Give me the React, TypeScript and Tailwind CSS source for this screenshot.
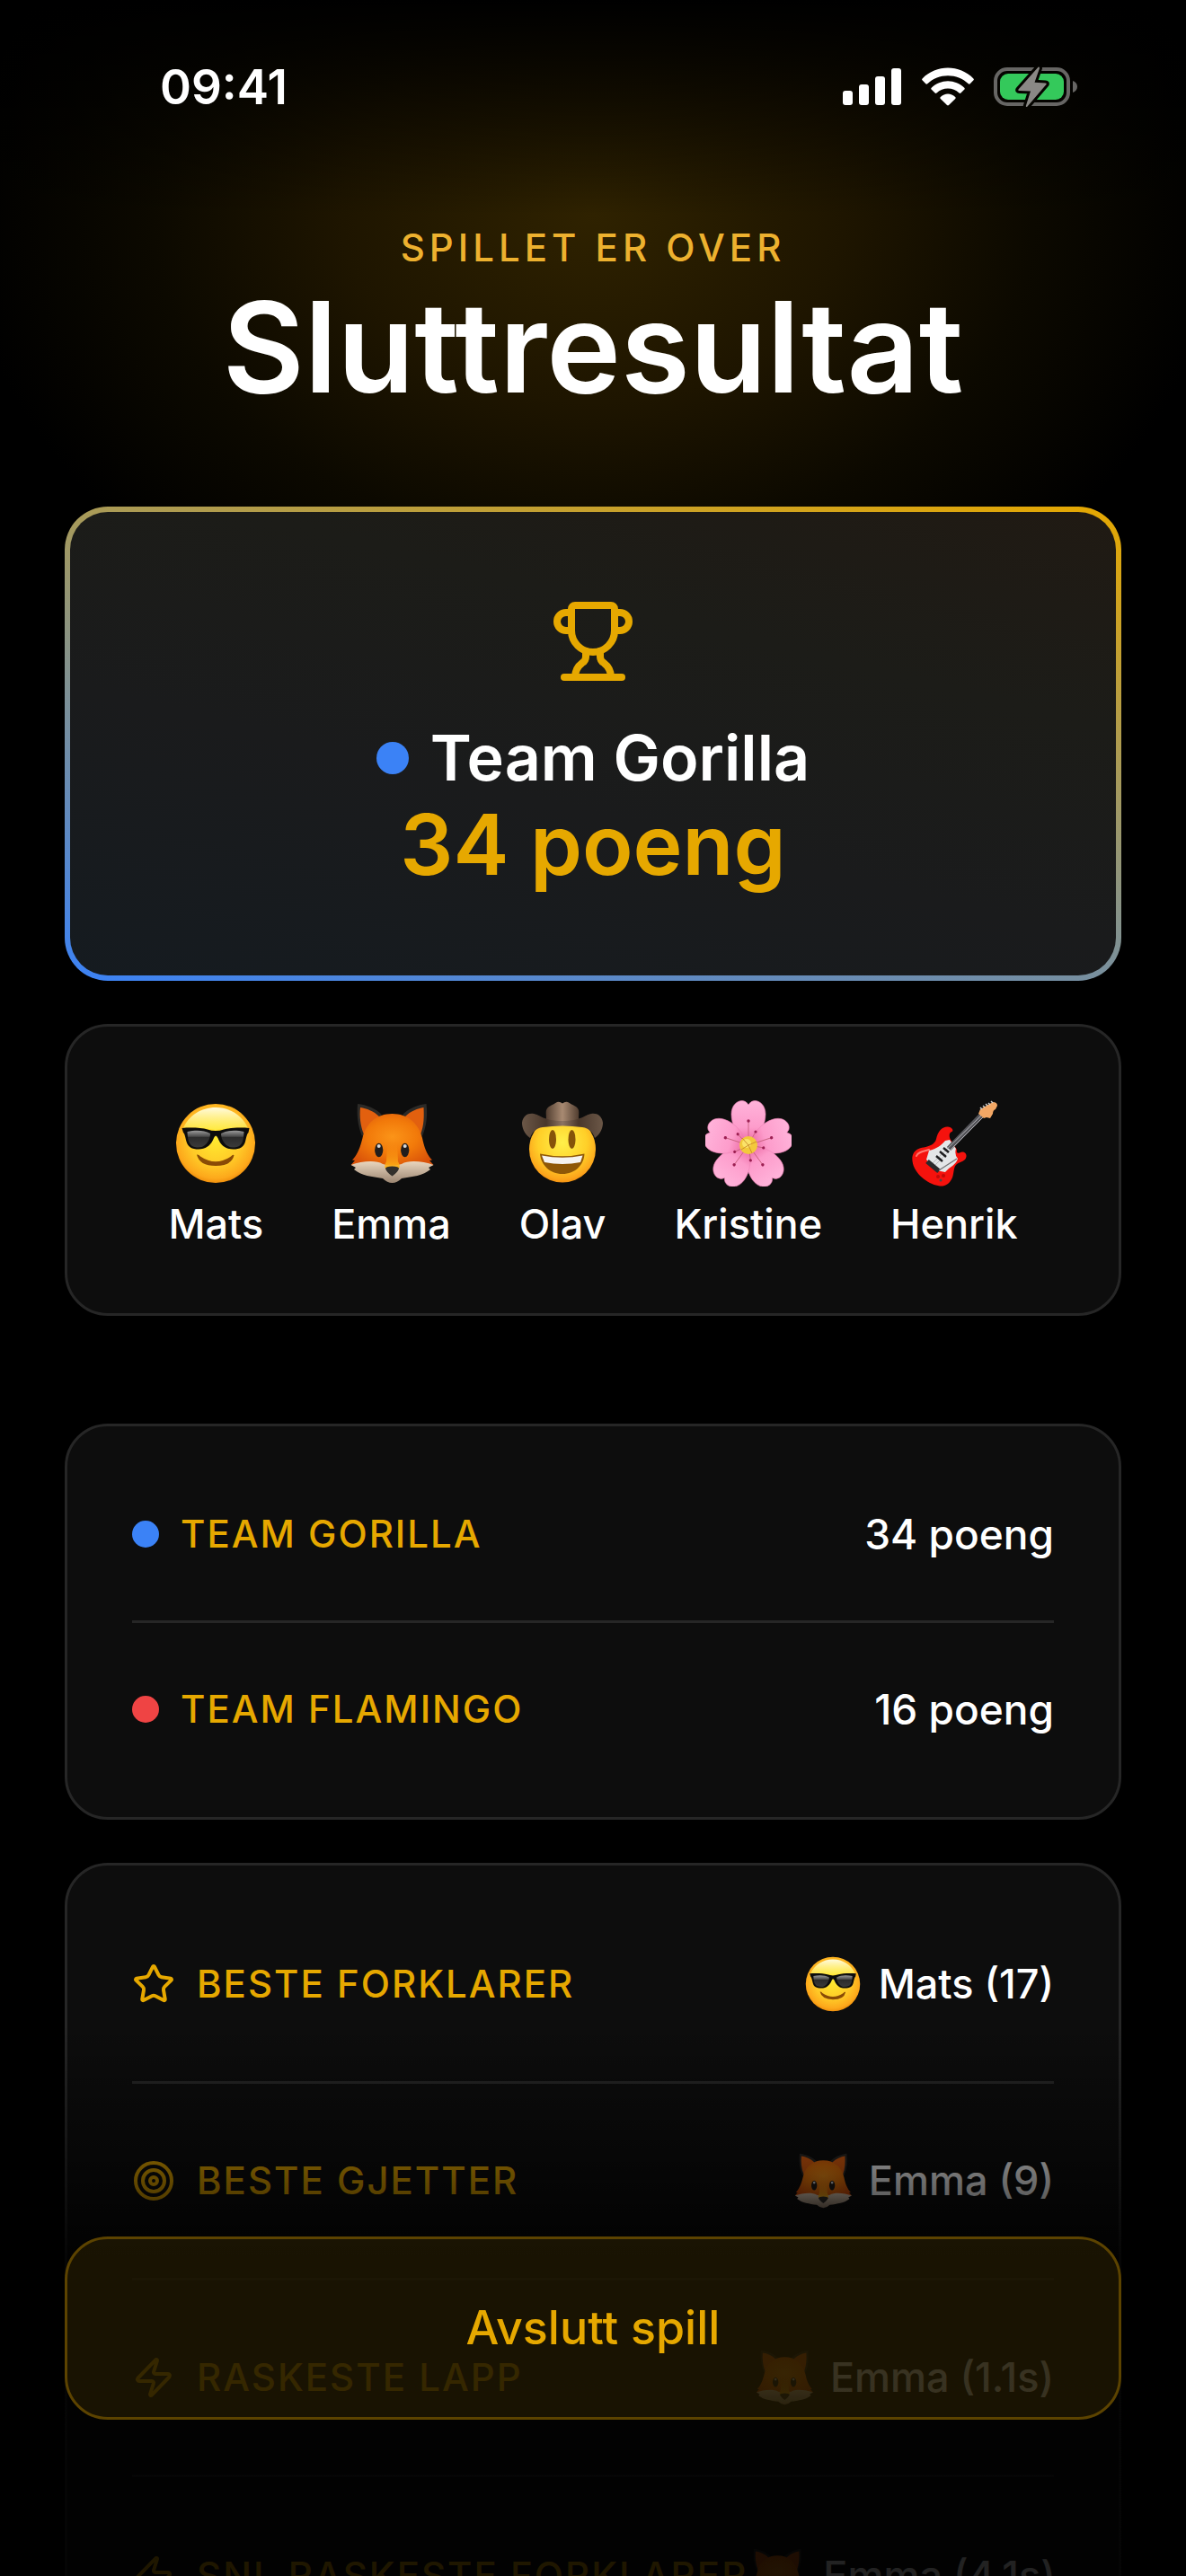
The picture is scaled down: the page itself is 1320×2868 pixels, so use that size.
import { useId, type ComponentType } from "react";
import { Star, Target, Trophy, Zap, type LucideIcon } from "lucide-react";

interface EmojiProps {
  className?: string;
}

interface Player {
  name: string;
  Emoji: ComponentType<EmojiProps>;
}

interface Stat {
  label: string;
  value: string;
  Icon: LucideIcon;
  player: Player;
}

function CoolFace({ className }: EmojiProps) {
  const id = useId();
  return (
    <svg viewBox="0 0 96 96" className={className} aria-hidden="true">
      <defs>
        <radialGradient id={id + "f"} cx="0.5" cy="0.45" r="0.55">
          <stop offset="0" stopColor="#ffea30" />
          <stop offset="0.6" stopColor="#ffc927" />
          <stop offset="0.9" stopColor="#fda81b" />
          <stop offset="1" stopColor="#f08f0c" />
        </radialGradient>
        <linearGradient id={id + "s"} x1="0" y1="0" x2="0" y2="1">
          <stop offset="0" stopColor="#fffbe0" />
          <stop offset="1" stopColor="#fff04a" stopOpacity="0.7" />
        </linearGradient>
        <linearGradient id={id + "l"} x1="0" y1="0" x2="0" y2="1">
          <stop offset="0" stopColor="#9a9a9a" />
          <stop offset="0.35" stopColor="#4a4a4a" />
          <stop offset="0.4" stopColor="#2b2b2b" />
          <stop offset="1" stopColor="#3a3a3a" />
        </linearGradient>
      </defs>
      <circle cx="48" cy="48" r="44" fill={`url(#${id}f)`} />
      <path d="M12 31C18 17 32 8 48 8s30 9 36 23C70 30 60 31 48 33 36 31 26 30 12 31Z" fill={`url(#${id}s)`} />
      <path
        d="M10.5 31C20 30 32 30.500 39 32.500Q48 35.500 57 32.500C64 30.500 76 30 85.500 31L84.500 36C83 37 82.500 40 81 46C79.500 52 75 54.500 67.500 54.500C58 54.500 53 49 50.500 42Q48 37 46 42C43.500 49 38 54.500 29 54.500C21.500 54.500 17 52 15.500 46C14 40 13.500 37 12 36Z"
        fill="#0c0c0c"
      />
      <path d="M16.500 35C25 33 35 33 42 37C42 44 37 52.500 29 52.500C19 52.500 17 47 16.500 35Z" fill={`url(#${id}l)`} />
      <path d="M79.500 35C71 33 61 33 54 37C54 44 59 52.500 67 52.500C77 52.500 79 47 79.500 35Z" fill={`url(#${id}l)`} />
      <path d="M27 60.500Q29 60 31 62.500Q48 74 65 62.500Q67 60 68.500 61Q66 73 48 73Q30 73 27 60.500Z" fill="#8a4b06" />
    </svg>
  );
}

function FoxFace({ className }: EmojiProps) {
  const id = useId();
  return (
    <svg viewBox="0 0 96 96" className={className} aria-hidden="true">
      <defs>
        <radialGradient id={id + "h"} cx="0.5" cy="0.42" r="0.6">
          <stop offset="0" stopColor="#fb9418" />
          <stop offset="0.5" stopColor="#f27a0a" />
          <stop offset="1" stopColor="#d9520a" />
        </radialGradient>
        <linearGradient id={id + "n"} x1="0" y1="0" x2="0" y2="1">
          <stop offset="0" stopColor="#fb9418" stopOpacity="0" />
          <stop offset="1" stopColor="#ffb414" />
        </linearGradient>
        <linearGradient id={id + "w"} x1="0" y1="0" x2="0" y2="1">
          <stop offset="0" stopColor="#e9d6bf" />
          <stop offset="1" stopColor="#9c8672" />
        </linearGradient>
      </defs>
      <path d="M10 4C20 5 30 9 37 16L15 40C10 28 9 16 10 4ZM86.500 4C77 5 67 9 60 16L82 40C87 28 88 16 86.500 4Z" fill="#2c2a27" />
      <path d="M13 8C20 9 28 12 34 18L17 38C13 28 12 18 13 8ZM83.500 8C77 9 69 12 63 18L80 38C84 28 84 18 83.500 8Z" fill="#e2600f" />
      <path
        d="M48.500 15C31 15 19 26 15.500 42C12.500 54 9 62 4 66.500L7 67L2.700 72L20 76H77L94.500 72L90 67L93 66.500C88 62 84.500 54 82 42C78 26 66 15 48.500 15Z"
        fill={`url(#${id}h)`}
      />
      <path
        d="M2.700 72C14 68 30 66 38 71Q48 74 59 71C67 66 83 68 94.500 72L89 75L91 77C83 84 71 85 59 87Q54 92 48.500 92Q43 92 38 87C26 85 14 84 6 77L8 75Z"
        fill={`url(#${id}w)`}
      />
      <path d="M43 48H54L55 68Q58 74 56 76H41Q39 74 42 68Z" fill={`url(#${id}n)`} />
      <ellipse cx="33.700" cy="55.500" rx="4.600" ry="7.700" fill="#211d1c" />
      <ellipse cx="62.700" cy="55.500" rx="4.600" ry="7.700" fill="#211d1c" />
      <ellipse cx="33.700" cy="51" rx="2" ry="2" fill="#d8d8d8" />
      <ellipse cx="62.700" cy="51" rx="2" ry="2" fill="#d8d8d8" />
      <path d="M41 76Q41 73.500 48.500 73.500T56 76Q55 80 48.500 84.500Q42 80 41 76Z" fill="#33302b" />
    </svg>
  );
}

function CowboyFace({ className }: EmojiProps) {
  const id = useId();
  return (
    <svg viewBox="0 0 96 96" className={className} aria-hidden="true">
      <defs>
        <radialGradient id={id + "f"} cx="0.5" cy="0.4" r="0.62">
          <stop offset="0" stopColor="#fff04a" />
          <stop offset="0.6" stopColor="#ffcf28" />
          <stop offset="0.9" stopColor="#fca31b" />
          <stop offset="1" stopColor="#ee8a0c" />
        </radialGradient>
        <linearGradient id={id + "c"} x1="0" y1="0" x2="1" y2="0">
          <stop offset="0" stopColor="#4d3a2d" />
          <stop offset="0.5" stopColor="#a88a72" />
          <stop offset="1" stopColor="#4d3a2d" />
        </linearGradient>
        <linearGradient id={id + "b"} x1="0" y1="0" x2="1" y2="0">
          <stop offset="0" stopColor="#6b5747" />
          <stop offset="0.3" stopColor="#49372b" />
          <stop offset="0.5" stopColor="#8c7462" />
          <stop offset="0.7" stopColor="#49372b" />
          <stop offset="1" stopColor="#6b5747" />
        </linearGradient>
      </defs>
      <circle cx="48" cy="54.500" r="37" fill={`url(#${id}f)`} />
      <path d="M29 25C31 20 29 15 30 11C32 6 36 6 42 2Q45 1 48 3.500Q51 1 54 2C60 6 64 6 66 11C67 15 65 20 67 25Z" fill={`url(#${id}c)`} />
      <path
        d="M12 42C5 37 3 30 3 25C4 17 10 14 16 15C23 16 27 23 48 23S73 16 80 15C86 14 92 17 93 25C93 30 91 37 84 42C82 36 78 31 70 30Q48 27 26 30C18 31 14 36 12 42Z"
        fill={`url(#${id}b)`}
      />
      <ellipse cx="37" cy="43.500" rx="4" ry="10.500" fill="#86530a" />
      <ellipse cx="58.500" cy="43.500" rx="4" ry="10.500" fill="#86530a" />
      <path d="M23 59.500Q48 65 72.500 59.500C72 72 62 82 48 82S24 72 23 59.500Z" fill="#8f5807" />
      <path d="M25 61.500Q48 66 70.500 61.500L68 69Q48 73 28 69Z" fill="#f5f3f1" />
    </svg>
  );
}

function Blossom({ className }: EmojiProps) {
  const id = useId();
  const petals = [0, 72, 144, 216, 288];
  return (
    <svg viewBox="0 0 96 96" className={className} aria-hidden="true">
      <defs>
        <linearGradient id={id + "p"} x1="0" y1="0" x2="0" y2="1">
          <stop offset="0" stopColor="#ffb3da" />
          <stop offset="0.6" stopColor="#fd9ccb" />
          <stop offset="1" stopColor="#e8609c" />
        </linearGradient>
      </defs>
      {petals.map((angle) => (
        <path
          key={angle}
          d="M48 50C36 40 29 28 29 15.500C29 6 35 0.500 41 0.500Q45.500 0.500 48 5Q50.500 0.500 55 0.500C61 0.500 67 6 67 15.500C67 28 60 40 48 50Z"
          fill={`url(#${id}p)`}
          stroke="#ee85b8"
          strokeWidth="0.6"
          transform={`rotate(${angle} 48 50)`}
        />
      ))}
      {petals.map((angle) => (
        <g key={angle} transform={`rotate(${angle} 48 50)`}>
          <path d="M48 44V24M51 44L56 35" stroke="#c9637f" strokeWidth="0.9" />
          <circle cx="48" cy="23" r="1.700" fill="#9c1f52" />
          <circle cx="56" cy="35" r="1.600" fill="#9c1f52" />
        </g>
      ))}
      <circle cx="48" cy="50" r="10" fill="#f3c93b" />
      <circle cx="46" cy="48" r="5" fill="#fbe36a" />
      <path d="M48 50L41 42M48 50L57 46M48 50L52 59M48 50L40 55" stroke="#c98a2b" strokeWidth="0.9" />
    </svg>
  );
}

function Guitar({ className }: EmojiProps) {
  return (
    <svg viewBox="0 0 96 96" className={className} aria-hidden="true">
      <path
        d="M1.300 64C2 56 8 53.500 14 52.500C22 51 27 48 28 43C30 34 35 29 41 29.500C46 30 47.500 34 45.500 35C42 36 42 40 44 44L51 55Q50 60 54 58.500C58 56 62 58.500 61.500 62.500C61 68 55 68 51 71C47 74 48 80 46 86C43 93 38 96 32 95.500C20 94 1 82 1.300 64Z"
        fill="#f5120d"
      />
      <path d="M6 62C8 57 14 57 20 55" stroke="#ff7a70" strokeWidth="2" strokeLinecap="round" fill="none" />
      <path d="M20 56C28 54 34 50 38 45L43 44L50 54Q48 60 52 65C50 72 43 74 38 80L28 78L17 66Z" fill="#e4e6e8" />
      <path d="M42 54L78 17" stroke="#55555a" strokeWidth="6" />
      <path d="M24 70L79 16M27 72L81 18" stroke="#b9b9bd" strokeWidth="0.9" />
      <path d="M28 62L35 68M32 57L39 63M36 53L42 58" stroke="#1d1d1f" strokeWidth="2.400" />
      <path d="M18 68L31 79" stroke="#2a2a2c" strokeWidth="5.500" />
      <path d="M31 78L51 65" stroke="#77777a" strokeWidth="1.400" />
      <path d="M75 15L77 10L91 2Q96 2 96 6L94 10Q91 11 91 15L88 20L84 19L81 20Z" fill="#f2a765" />
      <path d="M77 8l2 2M80 6l2 2M83 4l2 2M86 3l2 2M89 1l2 2" stroke="#d0d0d0" strokeWidth="1.500" />
      <circle cx="30" cy="85" r="2" fill="#c10a08" />
      <circle cx="36" cy="84" r="2" fill="#c10a08" />
      <circle cx="33" cy="89" r="1.500" fill="#4a4a4a" />
    </svg>
  );
}

const mats: Player = { name: "Mats", Emoji: CoolFace };
const emma: Player = { name: "Emma", Emoji: FoxFace };
const olav: Player = { name: "Olav", Emoji: CowboyFace };
const kristine: Player = { name: "Kristine", Emoji: Blossom };
const henrik: Player = { name: "Henrik", Emoji: Guitar };

const players = [mats, emma, olav, kristine, henrik];

const teams = [
  { name: "Team Gorilla", points: 34, dot: "bg-[#3b82f6]" },
  { name: "Team Flamingo", points: 16, dot: "bg-[#ef4444]" },
];

const stats: Stat[] = [
  { label: "Beste forklarer", value: "Mats (17)", Icon: Star, player: mats },
  { label: "Beste gjetter", value: "Emma (9)", Icon: Target, player: emma },
  { label: "Raskeste lapp", value: "Emma (1.1s)", Icon: Zap, player: emma },
  { label: "Snl raskeste forklarer", value: "Emma (4.1s)", Icon: Zap, player: emma },
];

function StatusBar() {
  return (
    <div className="flex h-[194px] items-center justify-between pr-[120px] pl-[178px]">
      <span className="text-[53px] leading-[64px] font-semibold">09:41</span>
      <div className="flex items-center gap-[22px]">
        <svg width="66" height="44" viewBox="0 0 66 44" fill="#fff" aria-label="Signal">
          <rect x="0" y="26" width="11" height="16" rx="3" />
          <rect x="18" y="19" width="11" height="23" rx="3" />
          <rect x="36" y="10" width="11" height="32" rx="3" />
          <rect x="54" y="1" width="11" height="41" rx="3" />
        </svg>
        <svg width="58" height="44" viewBox="0 0 58 44" fill="#fff" aria-label="Wifi">
          <path d="M.6 12.400C8.500 4.600 18.500.6 29 .6s20.500 4 28.400 11.800c.6.600.6 1.300.1 1.900l-3.800 3.900c-.6.600-1.300.6-1.900 0C45.500 12.300 37.500 9.200 29 9.200s-16.500 3.100-22.800 9c-.6.600-1.300.6-1.900 0L.5 14.300c-.5-.6-.5-1.300.1-1.900Z" />
          <path d="M10.700 22.700C15.700 18 22.200 15.200 29 15.200s13.300 2.800 18.300 7.500c.6.600.6 1.300.1 1.900l-4 4c-.6.600-1.300.6-1.900 0-3.500-3.200-7.900-5-12.500-5s-9 1.800-12.500 5c-.6.600-1.300.6-1.900 0l-4-4c-.5-.6-.5-1.300.1-1.900Z" />
          <path d="M20.800 33C23.100 30.900 26 29.600 29 29.600s5.900 1.300 8.200 3.400c.6.600.6 1.300 0 1.900L30 42c-.6.600-1.400.6-2 0l-7.200-7.100c-.6-.6-.6-1.300 0-1.900Z" />
        </svg>
        <svg width="94" height="46" viewBox="0 0 94 46" aria-label="Batteri">
          <rect x="2" y="3" width="81" height="39" rx="13" fill="none" stroke="#676664" strokeWidth="4" />
          <path d="M88 16c3 .8 5 3.400 5 6.500s-2 5.700-5 6.500Z" fill="#676664" />
          <rect x="7" y="8" width="71" height="29" rx="9" fill="#34c95b" />
          <path
            d="M49.500.7L27.500 25.500q-1 1.500 1 1.600l12.500.5-5.200 16.400q0 1.500 1.500.7L58.500 20q1-1.500-1-1.600l-12-.6L51 2q-.2-1.800-1.500-1.300Z"
            fill="#8a8885"
            stroke="#050400"
            strokeWidth="6"
            strokeLinejoin="round"
            paintOrder="stroke"
          />
        </svg>
      </div>
    </div>
  );
}

function WinnerCard() {
  return (
    <section className="rounded-[48px] bg-[linear-gradient(14deg,#3b82f6,#e6a800)] p-[6px]">
      <div className="flex flex-col items-center rounded-[42px] bg-[linear-gradient(14deg,#151b20,#1a1b1c_40%,#1c1c18_70%,#201a13)] pt-[96px] pb-[98px]">
        <Trophy size={96} className="text-[#e6a800]" />
        <h2 className="mt-[34px] flex items-center gap-[24px] text-[70px] leading-[96px] font-semibold">
          <span className="size-[36px] rounded-full bg-[#3b82f6]" />
          Team Gorilla
        </h2>
        <p className="text-[93px] leading-[96px] font-semibold text-[#e6a800]">34 poeng</p>
      </div>
    </section>
  );
}

function PlayersCard() {
  return (
    <ul className="mt-[48px] flex justify-center gap-[76px] rounded-[48px] border-[3px] border-[#262626] bg-[#0d0d0d] pt-[82px] pb-[67px]">
      {players.map(({ name, Emoji }) => (
        <li key={name} className="flex flex-col items-center gap-[10px]">
          <Emoji className="size-[96px]" />
          <span className="text-[45px] leading-[64px] font-medium">{name}</span>
        </li>
      ))}
    </ul>
  );
}

function TeamsCard() {
  return (
    <dl className="mt-[120px] divide-y-[3px] divide-[#262626] rounded-[48px] border-[3px] border-[#262626] bg-[#0d0d0d] px-[72px] py-[24px]">
      {teams.map((team) => (
        <div key={team.name} className="flex h-[195px] items-center justify-between last:h-[192px]">
          <dt className="flex items-center gap-[24px] text-[42px] leading-[60px] font-medium tracking-[2px] text-[#e6a800] uppercase">
            <span className={`size-[30px] rounded-full ${team.dot}`} />
            {team.name}
          </dt>
          <dd className="text-[46px] leading-[64px] font-medium">{team.points} poeng</dd>
        </div>
      ))}
    </dl>
  );
}

function StatsCard() {
  return (
    <dl className="mt-[48px] divide-y-[3px] divide-[#262626] rounded-[48px] border-[3px] border-[#262626] bg-[#0d0d0d] px-[72px] py-[24px]">
      {stats.map(({ label, value, Icon, player }) => (
        <div key={label} className="flex h-[219px] items-center justify-between whitespace-nowrap">
          <dt className="flex items-center gap-[24px] text-[42px] leading-[60px] font-medium tracking-[2px] text-[#e6a800] uppercase">
            <Icon size={48} className="shrink-0" />
            {label}
          </dt>
          <dd className="flex items-center gap-[18px] text-[45px] leading-[64px] font-medium">
            <player.Emoji className="size-[66px] shrink-0" />
            {value}
          </dd>
        </div>
      ))}
    </dl>
  );
}

function App() {
  return (
    <div className="relative h-screen overflow-hidden bg-black bg-[linear-gradient(to_bottom,#000000,#00000000_240px),radial-gradient(700px_520px_at_50%_240px,#2f2200,#1e1500_40%,#0c0900_70%,#000000)] font-['Inter','Liberation_Sans',sans-serif] text-white">
      <StatusBar />

      <header className="flex flex-col items-center pt-[52px] pb-[98px]">
        <p className="text-[42px] leading-[60px] font-medium tracking-[5px] text-[#edb12f] uppercase">Spillet er over</p>
        <h1 className="text-[140px] leading-[160px] font-semibold">Sluttresultat</h1>
      </header>

      <main className="px-[72px]">
        <WinnerCard />
        <PlayersCard />
        <TeamsCard />
        <StatsCard />
      </main>

      <footer className="absolute inset-x-0 bottom-0 bg-[linear-gradient(to_bottom,#00000000,#000000d9_260px,#000000dd)] px-[72px] pt-[236px] pb-[174px]">
        <button
          type="button"
          className="h-[204px] w-full cursor-pointer rounded-[48px] border-[3px] border-[#5c4300] bg-[#e6a800]/10 text-[52px] leading-[64px] font-medium text-[#e6a800]"
        >
          Avslutt spill
        </button>
      </footer>
    </div>
  );
}

export default App;
